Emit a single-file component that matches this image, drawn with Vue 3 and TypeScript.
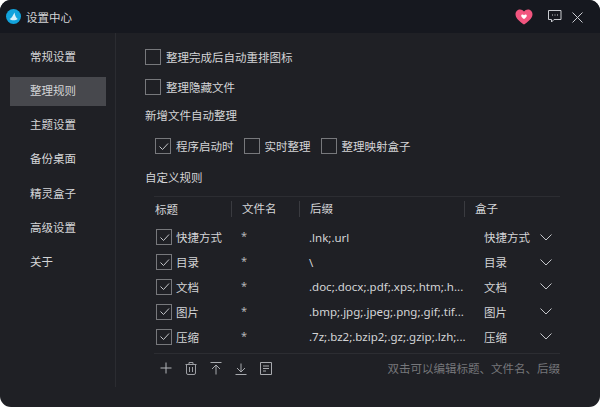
<script setup lang="ts">
interface Rule { title: string; name: string; suffix: string; box: string }
const nav: string[] = ['常规设置', '整理规则', '主题设置', '备份桌面', '精灵盒子', '高级设置', '关于']
const rules: Rule[] = [
  { title: '快捷方式', name: '*', suffix: '.lnk;.url', box: '快捷方式' },
  { title: '目录', name: '*', suffix: '\\', box: '目录' },
  { title: '文档', name: '*', suffix: '.doc;.docx;.pdf;.xps;.htm;.h...', box: '文档' },
  { title: '图片', name: '*', suffix: '.bmp;.jpg;.jpeg;.png;.gif;.tif...', box: '图片' },
  { title: '压缩', name: '*', suffix: '.7z;.bz2;.bzip2;.gz;.gzip;.lzh;...', box: '压缩' },
]
</script>

<template>
  <div class="window">
    <header class="titlebar">
      <svg class="logo" width="15" height="15" viewBox="0 0 15 15">
        <circle cx="7.5" cy="7.5" r="7.5" fill="#12a3dc" />
        <path d="M3.5 10 C5.5 9.5 6.5 7 8.5 3.5 C9 6.5 10 9 11.8 10 C10 11.5 5.5 11.8 3.5 10 Z" fill="#d8f1fb" />
      </svg>
      <span class="app-title">设置中心</span>
      <svg class="heart" width="18" height="16" viewBox="0 0 18 16">
        <path d="M9 15.5 C6 13.5 .5 10 .5 5.3 C.5 2.3 2.8 .5 5 .5 C6.6 .5 8 1.2 9 2.5 C10 1.2 11.4 .5 13 .5 C15.2 .5 17.5 2.3 17.5 5.3 C17.5 10 12 13.5 9 15.5 Z" fill="#f2557f" />
        <path d="M9 10 C7.8 9.2 6.2 8 6.2 6.7 C6.2 5.3 8.2 5 9 6.2 C9.8 5 11.8 5.3 11.8 6.7 C11.8 8 10.2 9.2 9 10 Z" fill="#fff" />
      </svg>
      <svg class="chat" width="14" height="14" viewBox="0 0 14 14" fill="none" stroke="#c9cbd0">
        <path d="M.5 .5 H13 V9.5 H6 L3.5 12 V9.5 H.5 Z" />
        <path d="M4 5 h1 M6.5 5 h1 M9 5 h1" stroke-width="1.2" />
      </svg>
      <svg class="close" width="11" height="11" viewBox="0 0 11 11" stroke="#c9cbd0">
        <path d="M.5 .5 L10.5 10.5 M10.5 .5 L.5 10.5" />
      </svg>
    </header>

    <div class="body">
      <nav class="sidebar">
        <div v-for="(item, i) in nav" :key="item" class="nav-item" :class="{ active: i === 1 }">{{ item }}</div>
      </nav>

      <main class="main">
        <label class="row first"><span class="box"></span>整理完成后自动重排图标</label>
        <label class="row second-row"><span class="box"></span>整理隐藏文件</label>
        <div class="section">新增文件自动整理</div>
        <div class="options">
          <label class="opt"><span class="box on"><svg width="13" height="13" viewBox="0 0 13 13"><path d="M2.5 6.5 L5.5 9.5 L11 3.5" fill="none" stroke="#c4c6ca" /></svg></span>程序启动时</label>
          <label class="opt"><span class="box"></span>实时整理</label>
          <label class="opt"><span class="box"></span>整理映射盒子</label>
        </div>
        <div class="section second">自定义规则</div>

        <div class="table">
          <div class="thead">
            <div class="c1">标题</div>
            <div class="c2 th-sep">文件名</div>
            <div class="c3 th-sep">后缀</div>
            <div class="c4 th-sep">盒子</div>
          </div>
          <div v-for="r in rules" :key="r.title" class="tr">
            <div class="c1 title-cell">
              <span class="box on"><svg width="13" height="13" viewBox="0 0 13 13"><path d="M2.5 6.5 L5.5 9.5 L11 3.5" fill="none" stroke="#c4c6ca" /></svg></span>
              {{ r.title }}
            </div>
            <div class="c2 name-cell">{{ r.name }}</div>
            <div class="c3 suffix-cell">{{ r.suffix }}</div>
            <div class="c4 box-cell">
              <span>{{ r.box }}</span>
              <svg width="12" height="7" viewBox="0 0 12 7" fill="none" stroke="#c4c6ca"><path d="M.5 .5 L6 6 L11.5 .5" /></svg>
            </div>
          </div>
        </div>

        <div class="toolbar">
          <svg width="12" height="12" viewBox="0 0 12 12" stroke="#b4b6bb" fill="none"><path d="M6 .5 V11.5 M.5 6 H11.5" /></svg>
          <svg width="12" height="13" viewBox="0 0 12 13" stroke="#9c9ea3" fill="none"><path d="M.5 2.5 H11.5 M4 2.5 V.5 H8 V2.5 M1.5 2.5 V11 Q1.5 12.5 3 12.5 H9 Q10.5 12.5 10.5 11 V2.5 M4.5 5 V10 M7.5 5 V10" /></svg>
          <svg width="12" height="13" viewBox="0 0 12 13" stroke="#a8aaaf" fill="none"><path d="M.5 .5 H11.5 M6 3 V12.5 M2 7 L6 3 L10 7" /></svg>
          <svg width="12" height="13" viewBox="0 0 12 13" stroke="#a8aaaf" fill="none"><path d="M.5 12.5 H11.5 M6 1.5 V10 M2 6 L6 10 L10 6" /></svg>
          <svg width="12" height="13" viewBox="0 0 12 13" stroke="#a8aaaf" fill="none"><path d="M.5 .5 H11.5 V12.5 H.5 Z M3 4 H9 M3 6.5 H9 M3 9 H6" /></svg>
          <span class="hint">双击可以编辑标题、文件名、后缀</span>
        </div>
      </main>
    </div>
  </div>
</template>

<style>
html, body { margin: 0; background: #fff; }
</style>

<style scoped>
.window {
  width: 600px;
  height: 407px;
  border-radius: 11px;
  overflow: hidden;
  background: #1f2025;
  color: #d4d5d7;
  font-family: "Noto Sans", "Noto Sans CJK SC", sans-serif;
  font-size: 11.5px;
  display: flex;
  flex-direction: column;
}
.titlebar {
  height: 33px;
  flex: none;
  background: #16181f;
  display: flex;
  align-items: center;
  padding-left: 6px;
  padding-right: 17px;
}
.logo { margin-right: 5px; }
.app-title { flex: 1; }
.heart { margin-right: 15px; }
.chat { margin-right: 10px; margin-top: 1px; }
.close { margin-top: 1px; }
.body { flex: 1; display: flex; min-height: 0; }
.sidebar {
  width: 116px;
  height: 354px;
  flex: none;
  box-sizing: border-box;
  border-right: 1px solid #2b2c31;
  padding: 9.5px 9px 0 10px;
  display: flex;
  flex-direction: column;
  gap: 5px;
}
.nav-item {
  height: 29.3px;
  line-height: 27px;
  padding-left: 20px;
}
.nav-item.active { background: #47484d; line-height: 28px; }
.main { flex: 1; padding-left: 29px; padding-right: 40px; min-width: 0; }
.row {
  height: 31px;
  display: flex;
  align-items: center;
  gap: 5px;
}
.row.first { margin-top: 8px; }
.row.second-row { height: 30px; }
.box {
  width: 14px;
  height: 14px;
  flex: none;
  border: 1px solid #77787c;
  display: inline-flex;
  align-items: center;
  justify-content: center;
}
.box svg { display: block; }
.section { height: 29px; line-height: 28px; }
.section.second { margin-top: 1px; height: 31px; line-height: 31px; }
.options {
  height: 30px;
  display: flex;
  align-items: center;
  gap: 10px;
  padding-left: 10px;
}
.opt { display: flex; align-items: center; gap: 5px; }
.table {
  margin-top: 3px;
  margin-left: 9px;
  border-top: 1px solid #2c2d32;
  border-bottom: 1px solid #2c2d32;
  padding-bottom: 4px;
}
.thead, .tr {
  display: grid;
  grid-template-columns: 77px 68px 165px 1fr;
  align-items: center;
}
.thead { height: 24px; margin-bottom: 4px; }
.tr { height: 24.8px; }
.c1 { padding-left: 1px; }
.th-sep {
  border-left: 1px solid #3a3b40;
  height: 16px;
  line-height: 16px;
  padding-left: 10px;
}
.title-cell { display: flex; align-items: center; gap: 4px; padding-left: 2px; }
.name-cell { padding-left: 10px; font-size: 11px; margin-top: -3px; color: #b4b5b8; }
.suffix-cell { padding-left: 10px; min-width: 0; white-space: nowrap; }
.box-cell {
  display: flex;
  align-items: center;
  justify-content: space-between;
  padding-left: 20px;
  padding-right: 8px;
}
.toolbar {
  height: 29px;
  display: flex;
  align-items: center;
  gap: 13px;
  margin-left: 15px;
}
.hint { margin-left: auto; color: #76777b; }
</style>
